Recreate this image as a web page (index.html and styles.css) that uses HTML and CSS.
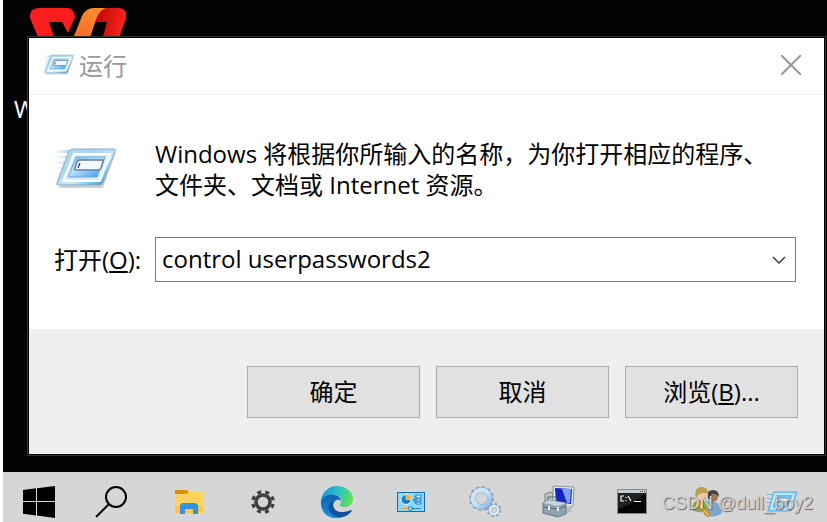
FILE: index.html
```
<!DOCTYPE html>
<html lang="zh-CN">
<head>
    <meta charset="UTF-8">
    <meta name="viewport" content="width=device-width, initial-scale=1.0">
    <title>运行</title>
    <link rel="stylesheet" href="styles.css">
</head>
<body>
<!-- Shared shapes -->
<svg class="defs" width="0" height="0" aria-hidden="true">
    <defs>
        <linearGradient id="run-frame" x1="0" y1="0" x2="1" y2="1">
            <stop offset="0" stop-color="#c3dcec"/>
            <stop offset="0.35" stop-color="#a5d5f2"/>
            <stop offset="0.6" stop-color="#cdebfb"/>
            <stop offset="0.85" stop-color="#45aae6"/>
            <stop offset="1" stop-color="#9fd0ee"/>
        </linearGradient>
        <linearGradient id="run-inner" x1="0" y1="0" x2="1" y2="1">
            <stop offset="0" stop-color="#7fc0ec"/>
            <stop offset="0.45" stop-color="#b8e0f8"/>
            <stop offset="1" stop-color="#2f93e4"/>
        </linearGradient>
        <linearGradient id="run-speed" x1="0" y1="0" x2="1" y2="0">
            <stop offset="0" stop-color="#a9d3ee" stop-opacity="0"/>
            <stop offset="1" stop-color="#8cc4ea"/>
        </linearGradient>
        <symbol id="run-icon" viewBox="0 0 64 44">
            <path d="M0 3h20v3H0zM2 9h16v2H2zM0 14h16v3H0zM3 20h11v2H3zM0 25h12v3H0zM2 31h8v2H2z" fill="url(#run-speed)"/>
            <path d="M18 5h44L49 41H5z" fill="#000" opacity="0.18"/>
            <path d="M19 2h41q2 0 1 2L49 36q-1 2-3 2H4q-2 0-1-2L15 4q1-2 4-2z" fill="url(#run-frame)" stroke="#8ba9bd"/>
            <path d="M20 7h36L46 34H9z" fill="#d9effc" stroke="#fff" stroke-width="2"/>
            <path d="M22 10h29L43 30H14z" fill="url(#run-inner)" stroke="#6ba9d8"/>
            <path d="M25 13h23q2 0 1 2l-2 6q-1 2-3 2H22q-2 0-1-2l2-6q1-2 2-2z" fill="#f4f8fd" stroke="#5d7fac" stroke-width="1.5"/>
            <path d="M26 16l-2 5" stroke="#333" stroke-width="1.2"/>
        </symbol>
        <symbol id="run-icon-small" viewBox="0 0 32 22">
            <path d="M0 3h8v1H0zM1 7h6v1H1zM0 11h5v1H0zM1 15h3v1H1z" fill="#6dbcf0"/>
            <path d="M8 1h23l-6 19H2z" fill="#8fd0f7" stroke="#62abe0"/>
            <path d="M9 3h19l-5 15H5z" fill="none" stroke="#e6f5ff"/>
            <path d="M11 5h14l-4 11H8z" fill="url(#run-inner)" stroke="#4ba3e3"/>
            <path d="M13 7h10l-1 4H12z" fill="#eef7fd" stroke="#4f8fc8"/>
        </symbol>
    </defs>
</svg>

<main class="desktop">
    <div class="shortcut">
        <svg class="shortcut-logo" viewBox="0 0 96 72" aria-hidden="true">
            <defs>
                <linearGradient id="wps-orange" x1="0.6" y1="0" x2="0.4" y2="1">
                    <stop offset="0" stop-color="#ff8a2b"/>
                    <stop offset="1" stop-color="#ee4a28"/>
                </linearGradient>
                <linearGradient id="wps-right" x1="0" y1="0" x2="1" y2="0.4">
                    <stop offset="0" stop-color="#b80000"/>
                    <stop offset="1" stop-color="#ff2a20"/>
                </linearGradient>
            </defs>
            <path d="M65 0h24q9 1 7 10L76 68H62l15-54H66z" fill="url(#wps-right)"/>
            <path d="M8 0h29q5 0 7 5l1 4-7 16-6-11H19l20 58H26L0 10Q-1 1 8 0z" fill="#fb1c1e"/>
            <path d="M64 0h12q-6 2-9 9L47 68H28L52 8q4-8 12-8z" fill="url(#wps-orange)"/>
        </svg>
        <span class="shortcut-name">WPS</span>
    </div>

    <form class="dialog" onsubmit="event.preventDefault();">
        <header class="dialog-title">
            <svg class="title-icon" aria-hidden="true"><use href="#run-icon"/></svg>
            <h1>运行</h1>
            <button type="button" class="close-button" aria-label="关闭">
                <svg width="20" height="20" viewBox="0 0 20 20"><path d="M0 0l20 20M20 0L0 20" stroke="#999" stroke-width="2"/></svg>
            </button>
        </header>
        <div class="dialog-body">
            <svg class="body-icon" aria-hidden="true"><use href="#run-icon"/></svg>
            <p>Windows 将根据你所输入的名称，为你打开相应的程序、文件夹、文档或 Internet 资源。</p>
            <label for="command">打开(<u>O</u>):</label>
            <div class="combo">
                <input type="text" id="command" value="control userpasswords2">
                <button type="button" class="combo-arrow" aria-label="展开">
                    <svg width="14" height="8" viewBox="0 0 14 8"><path d="M1 1l6 6 6-6" fill="none" stroke="#333" stroke-width="1.4"/></svg>
                </button>
            </div>
        </div>
        <footer class="dialog-footer">
            <button type="submit" class="push-button">确定</button>
            <button type="button" class="push-button">取消</button>
            <button type="button" class="push-button">浏览(<u>B</u>)...</button>
        </footer>
    </form>
</main>

<nav class="taskbar">
    <button type="button" class="task" aria-label="开始">
        <svg viewBox="0 0 36 36"><path d="M1 6l13-1.7V17H1zM15 4.200L33 2v15H15zM1 18h13v13.4L1 29.7zM15 18h18v16l-18-2.4z"/></svg>
    </button>
    <button type="button" class="task" aria-label="搜索">
        <svg viewBox="0 0 36 36"><g fill="none" stroke="#000" stroke-width="2"><circle cx="20" cy="13" r="10"/><path d="M13 20L0 33"/></g></svg>
    </button>
    <button type="button" class="task" aria-label="文件资源管理器">
        <svg viewBox="0 0 36 36">
            <path d="M5 6h12l2 2-2 4H5z" fill="#d99100"/>
            <path d="M5 10h11l3-2h14v21H5z" fill="#ffd35c"/>
            <path d="M5 22h28v7H5z" fill="#fcc645"/>
            <path d="M12 19h14l2 2v9h-5v-5h-8v5h-5v-9z" fill="#3492d8"/>
        </svg>
    </button>
    <button type="button" class="task" aria-label="设置">
        <svg viewBox="0 0 36 36">
            <g fill="none" stroke="#404040">
                <circle cx="19" cy="18" r="7" stroke-width="3.5"/>
                <circle cx="19" cy="18" r="10.3" stroke-width="3.2" stroke-dasharray="4 4.09" transform="rotate(11 19 18)"/>
            </g>
        </svg>
    </button>
    <button type="button" class="task" aria-label="Microsoft Edge">
        <svg viewBox="0 0 36 36">
            <defs>
                <linearGradient id="edge-top" x1="0" y1="0.3" x2="1" y2="0.5">
                    <stop offset="0" stop-color="#1593d8"/>
                    <stop offset="0.5" stop-color="#28bfc8"/>
                    <stop offset="1" stop-color="#67e04d"/>
                </linearGradient>
                <linearGradient id="edge-low" x1="0" y1="0" x2="0" y2="1">
                    <stop offset="0" stop-color="#1061ae"/>
                    <stop offset="1" stop-color="#1b8fdc"/>
                </linearGradient>
            </defs>
            <path d="M3 17C4 8 11 2 19 2c9 0 16 6 16 13 0 5-4 8-8 8-3 0-6-1-5-3 4-5-1-9-6-9C10 11 5 13 3 17z" fill="url(#edge-top)"/>
            <path d="M3 17c2-5 8-7 13-6 4 0 7 3 7 6-3-3-8 0-8 5 0 6 4 10 9 11-11 4-22-3-21-16z" fill="url(#edge-low)"/>
            <path d="M16 17c-3 6 2 12 9 11 3 0 5-1 8-2 1 0 1 1 0 2-5 6-13 7-18 3-7-5-5-13 1-14z" fill="#1152a0"/>
        </svg>
    </button>
    <button type="button" class="task" aria-label="控制面板">
        <svg viewBox="0 0 36 36">
            <rect x="5.5" y="8.5" width="27" height="19" fill="#8fd7fb" stroke="#176ba8"/>
            <circle cx="14" cy="15.5" r="5" fill="#1c7fc5" stroke="#e8f7ff"/>
            <path d="M14 15.500V10a5.5 5.5 0 0 1 5.5 5.5z" fill="#f9ae2b" stroke="#e8f7ff" stroke-width="0.5"/>
            <path d="M20 16h3v-4h2M23 16v3h2" fill="none" stroke="#227db9"/>
            <path d="M24 11h5v3h-5zM24 15h5v2h-5zM24 18h5v2h-5z" fill="#e8f7ff" stroke="#1c7fc5"/>
            <path d="M9 24.5h8" stroke="#f29a1f"/>
            <path d="M17 24.5h12" stroke="#1c7fc5"/>
            <rect x="17" y="23" width="3" height="3" fill="#fff" stroke="#1c7fc5"/>
        </svg>
    </button>
    <button type="button" class="task" aria-label="服务">
        <svg viewBox="0 0 36 36">
            <defs>
                <linearGradient id="gear-fill" x1="0" y1="0" x2="1" y2="1">
                    <stop offset="0" stop-color="#d8e4f2"/>
                    <stop offset="0.5" stop-color="#bfe6fa"/>
                    <stop offset="1" stop-color="#8aaede"/>
                </linearGradient>
            </defs>
            <g fill="none" stroke="#8ba3bb">
                <circle cx="15.5" cy="14.5" r="11" stroke-width="3" stroke-dasharray="3 2.76"/>
                <circle cx="15.5" cy="14.5" r="8.5" stroke-width="5.5"/>
                <circle cx="15.5" cy="14.5" r="8.5" stroke="url(#gear-fill)" stroke-width="4.5"/>
                <circle cx="28" cy="26" r="6" stroke-width="2.5" stroke-dasharray="2.3 2.4"/>
                <circle cx="28" cy="26" r="4" stroke-width="3.5"/>
                <circle cx="28" cy="26" r="4" stroke="#d8edfa" stroke-width="2.5"/>
            </g>
        </svg>
    </button>
    <button type="button" class="task" aria-label="管理工具">
        <svg viewBox="0 0 36 36">
            <path d="M5 10l5-2 3 1v12H5z" fill="#b9c2c5" stroke="#7d888c"/>
            <path d="M13 2l21 1-1 19-7 3-13-4z" fill="#e0e3e3" stroke="#8a9395"/>
            <path d="M15 4l17 1-1 15-15-2z" fill="#1524c4"/>
            <path d="M22 5h9l-1 14-3 0z" fill="#7da3f4"/>
            <path d="M21 25l8-3 3 5-9 4z" fill="#b8bebf"/>
            <path d="M3 19l6-3 17 3v11l-8 3-15-4z" fill="#8fa3ad" stroke="#667983"/>
            <path d="M3 19l6-3 17 3-8 3z" fill="#c8d5da"/>
            <path d="M8 16v-3h8v4M3 23l15 2 8-3" fill="none" stroke="#566871"/>
            <path d="M8 22h2v4H8zM17 23h2v4h-2z" fill="#e8edee"/>
        </svg>
    </button>
    <button type="button" class="task" aria-label="命令提示符">
        <svg viewBox="0 0 36 36">
            <rect x="3.5" y="5.5" width="29" height="24" fill="#050505" stroke="#888"/>
            <path d="M4 6h28v3H4z" fill="#c5ccd2"/>
            <path d="M26 7h1v1h-1zM28 7h1v1h-1zM30 7h1v1h-1z" fill="#444"/>
            <path d="M4 9h28L16 20 4 25z" fill="#333" opacity="0.6"/>
            <path d="M10 12H7v5h3M12 13v1M12 16v1M14 12l3 5M20 17.500h7" fill="none" stroke="#fff" stroke-width="1.2"/>
        </svg>
    </button>
    <button type="button" class="task" aria-label="用户帐户">
        <svg viewBox="0 0 36 36">
            <path d="M16 31V21q2-5 8-4 9 1 10 12-8 6-18 2z" fill="#7da5c9"/>
            <circle cx="25" cy="13" r="5" fill="#a87950"/>
            <path d="M19 12q0-6 6-6t6 7q-3-4-7-3l-3 6z" fill="#444"/>
            <path d="M4 26q0-10 8-10 7 0 8 9-6 6-16 1z" fill="#89ad4c"/>
            <circle cx="14" cy="11" r="6" fill="#efc79a"/>
            <path d="M8 15Q5 3 14 3q6 0 6 6-7 0-9 1z" fill="#b9a04e"/>
            <path d="M8 19q4-3 7 1v3l7 8-2 2-8-9q-4 0-5-5z" fill="#ffb62e" stroke="#c57c10"/>
        </svg>
    </button>
    <button type="button" class="task" aria-label="运行">
        <svg viewBox="0 0 36 36"><use href="#run-icon-small" x="4" y="7" width="32" height="22"/></svg>
    </button>
    <span class="watermark">CSDN @dull_boy2</span>
</nav>
</body>
</html>
```
FILE: styles.css
```
* {
    box-sizing: border-box;
}

body {
    margin: 0;
    padding-left: 3px;
    min-height: 100vh;
    display: flex;
    flex-direction: column;
    background: white;
    color: black;
    font-family: "Open Sans", "Noto Sans CJK SC", sans-serif;
    font-size: 24px;
    line-height: 31px;
}

button,
input {
    font: inherit;
    color: inherit;
}

.defs {
    position: absolute;
}

.desktop {
    position: relative;
    flex: 1;
    padding: 36px 1px 16px 24px;
    background: #040404;
}

.shortcut {
    position: absolute;
    left: 11px;
    top: 8px;
    color: white;
}

.shortcut-logo {
    display: block;
    width: 96px;
    height: 72px;
    margin-left: 16px;
}

.shortcut-name {
    display: block;
    margin-top: 13px;
}

/* Run dialog */
.dialog {
    position: relative;
    height: 100%;
    display: flex;
    flex-direction: column;
    border: 1px solid #333;
    outline: 1px solid black;
    outline-offset: -2px;
    padding: 1px;
    background: white;
}

.dialog-title {
    display: flex;
    align-items: center;
    height: 57px;
    padding: 0 23px 2px 14px;
    border-bottom: 1px solid #ececec;
    color: #999;
}

.title-icon {
    width: 32px;
    height: 22px;
}

.dialog-title h1 {
    flex: 1;
    margin: 0 0 0 4px;
    font-size: 24px;
    font-weight: 400;
}

.close-button {
    display: flex;
    padding: 0;
    border: none;
    background: none;
}

.dialog-body {
    flex: 1;
    display: grid;
    grid-template-columns: 101px 1fr;
    align-content: start;
    align-items: center;
    row-gap: 37px;
    padding: 43px 28px 47px 25px;
}

.body-icon {
    width: 64px;
    height: 44px;
}

.dialog-body p {
    margin: 0;
    padding-right: 24px;
}

.combo {
    display: flex;
    height: 45px;
    border: 1px solid #7a7a7a;
}

.combo input {
    flex: 1;
    min-width: 0;
    padding: 0 6px 2px;
    border: none;
    outline: none;
    background: white;
}

.combo-arrow {
    display: flex;
    align-items: center;
    justify-content: center;
    width: 32px;
    padding: 0;
    border: none;
    background: white;
}

.dialog-footer {
    display: flex;
    justify-content: flex-end;
    gap: 16px;
    padding: 37px 26px 36px;
    background: #efefef;
}

.push-button {
    width: 173px;
    height: 52px;
    padding: 0 0 2px;
    border: 1px solid #adadad;
    background: #e1e1e1;
}

/* Taskbar */
.taskbar {
    position: relative;
    display: flex;
    height: 51px;
    background: #d6d6d6;
}

.task {
    width: 74px;
    padding: 12px 0 3px;
    border: none;
    background: none;
}

.task svg {
    display: block;
    width: 36px;
    height: 36px;
    margin: 0 auto;
    overflow: visible;
}

.watermark {
    position: absolute;
    right: 14px;
    top: 16px;
    font-family: "Liberation Sans", sans-serif;
    font-size: 18px;
    color: #d0d0d0;
    text-shadow: 1px 1px 1px #666;
}
```
